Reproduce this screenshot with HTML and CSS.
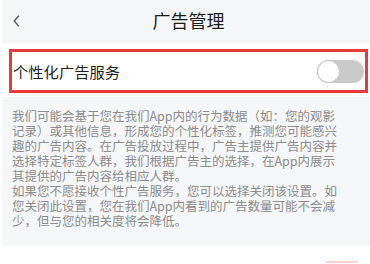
FILE: index.html
```html
<!DOCTYPE html>
<html lang="zh-CN">
<head>
<meta charset="utf-8">
<title>广告管理</title>
<link rel="stylesheet" href="styles.css">
</head>
<body>
<div class="page">
  <header class="topbar">
    <div class="back">
      <svg width="7" height="12" viewBox="0 0 7 12"><polyline points="5.8,0.8 1.2,6 5.8,11.2" fill="none" stroke="#555" stroke-width="1.3" stroke-linejoin="miter"/></svg>
    </div>
    <h1 class="title">广告管理</h1>
    <div class="spacer"></div>
  </header>
  <section class="setting">
    <div class="row">
      <span class="label">个性化广告服务</span>
      <span class="switch"><span class="knob"></span></span>
    </div>
  </section>
  <section class="desc">
    <p>我们可能会基于您在我们App内的行为数据（如：您的观影记录）或其他信息，形成您的个性化标签，推测您可能感兴趣的广告内容。在广告投放过程中，广告主提供广告内容并选择特定标签人群，我们根据广告主的选择，在App内展示其提供的广告内容给相应人群。</p>
    <p>如果您不愿接收个性广告服务，您可以选择关闭该设置。如您关闭此设置，您在我们App内看到的广告数量可能不会减少，但与您的相关度将会降低。</p>
  </section>
  <div class="hint"></div>
</div>
</body>
</html>
```
FILE: styles.css
```css
html, body {
  margin: 0;
  padding: 0;
  background: #ffffff;
}
body {
  font-family: "Noto Sans CJK SC", "Noto Sans", sans-serif;
  width: 370px;
  height: 264px;
  overflow: hidden;
}
.page {
  padding-left: 2px;
}
.topbar {
  height: 43px;
  background: #f5f6f8;
  display: grid;
  grid-template-columns: 1fr auto 1fr;
  align-items: center;
  padding-left: 5px;
}
.back {
  padding-left: 6px;
  display: flex;
  align-items: center;
  padding-bottom: 1px;
}
.back svg {
  display: block;
}
.title {
  margin: 0;
  font-size: 18px;
  font-weight: 400;
  color: #1c1c1c;
  line-height: 20px;
  padding-bottom: 3px;
}
.setting {
  background: #ffffff;
  padding: 6px 2px 4px 7px;
}
.row {
  height: 38px;
  border: 3px solid #e63a3e;
  display: flex;
  align-items: center;
  justify-content: space-between;
  padding: 0 0 0 1px;
}
.label {
  font-size: 15.3px;
  color: #1e1e1e;
  line-height: 20px;
}
.switch {
  width: 47px;
  height: 23px;
  border-radius: 12px;
  background: #c9c9c9;
  display: flex;
  align-items: center;
  margin-right: 1px;
}
.knob {
  width: 21px;
  height: 21px;
  border-radius: 50%;
  background: #ffffff;
  border: 1px solid #c4c4c4;
}
.desc {
  background: #f5f6f8;
  padding: 11px 16px 18px 10px;
}
.desc p {
  margin: 0;
  width: 330px;
  font-size: 12.5px;
  line-height: 15px;
  color: #8c8c8c;
}
.hint {
  width: 32px;
  height: 2px;
  margin: 15px 12px 0 auto;
  background: #fbd3d3;
}
```
